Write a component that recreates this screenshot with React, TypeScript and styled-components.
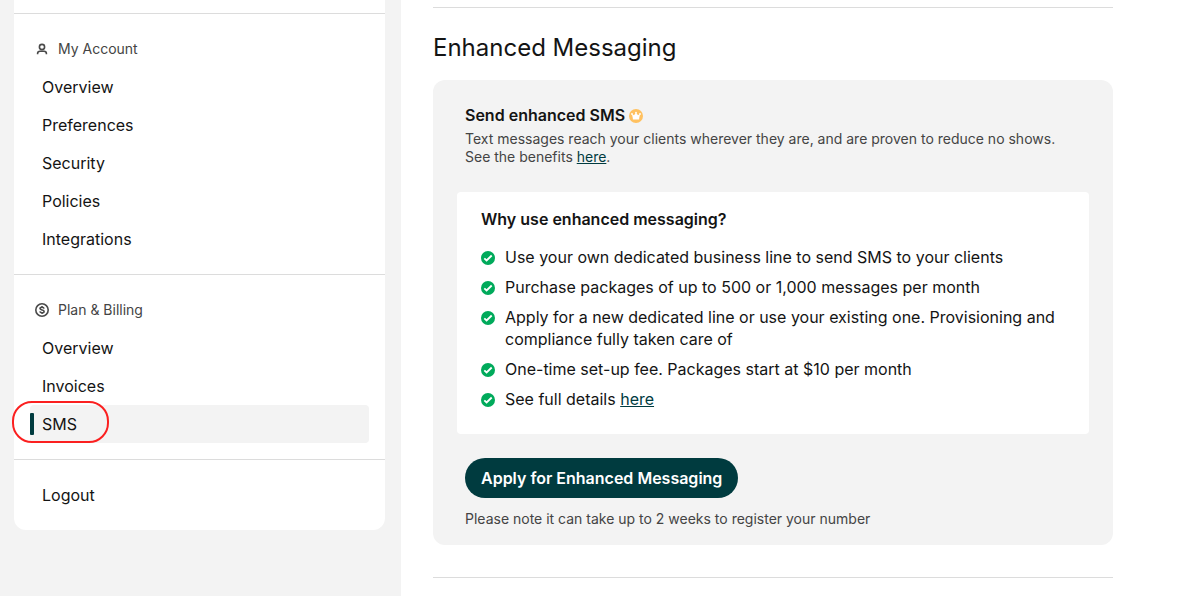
import React from "react";
import styled, { createGlobalStyle, css } from "styled-components";

const GlobalStyle = createGlobalStyle`
  *, *::before, *::after { box-sizing: border-box; }
  body {
    margin: 0;
    background: #ffffff;
    color: #141414;
    font-family: Inter, "Liberation Sans", sans-serif;
    font-size: 16px;
    line-height: 22px;
  }
`;

const Page = styled.div`
  display: flex;
  min-height: 100vh;
`;

const Sidebar = styled.aside`
  flex: 0 0 401px;
  padding: 0 16px 16px 14px;
  background: #f3f3f3;
`;

const Menu = styled.nav`
  padding-top: 13px;
  background: #ffffff;
  border-radius: 0 0 12px 12px;
`;

const MenuSection = styled.section`
  padding: 16px;
  border-top: 1px solid #dcdcdc;
`;

const MenuHeading = styled.h2`
  display: flex;
  align-items: center;
  gap: 8px;
  height: 38px;
  margin: 0;
  padding-left: 4px;
  color: #444444;
  font-size: 14px;
  font-weight: 400;
  line-height: 18px;
`;

const MenuList = styled.ul`
  margin: 0;
  padding: 0;
  list-style: none;
`;

const MenuItem = styled.li`
  position: relative;
`;

const MenuLink = styled.a<{ $active?: boolean }>`
  display: flex;
  align-items: center;
  height: 38px;
  padding: 0 12px;
  border-radius: 4px;
  color: #141414;
  text-decoration: none;

  ${({ $active }) =>
    $active &&
    css`
      padding-left: 0;
      background: #f3f3f3;

      &::before {
        content: "";
        width: 4px;
        height: 22px;
        margin-right: 8px;
        border-radius: 1px;
        background: #003b3f;
      }
    `}
`;

const Highlight = styled.span`
  position: absolute;
  top: -4px;
  left: -18px;
  width: 97px;
  height: 42px;
  border: 2px solid #fb2020;
  border-radius: 20px;
  pointer-events: none;
`;

const Main = styled.main`
  flex: 1;
  min-width: 0;
  padding: 7px 72px 0 32px;
`;

const Feature = styled.section`
  padding: 24px 0 32px;
  border: solid #dcdcdc;
  border-width: 1px 0;
`;

const Title = styled.h1`
  margin: 0 0 16px;
  font-size: 24px;
  font-weight: 400;
  line-height: 32px;
`;

const Card = styled.div`
  padding: 24px 24px 17px;
  border-radius: 12px;
  background: #f3f3f3;
`;

const Intro = styled.div`
  padding: 0 8px;
`;

const Badge = styled.svg`
  flex: none;
  width: 14px;
  height: 14px;
  margin-top: 5px;
`;

const Subtitle = styled.h3`
  display: flex;
  gap: 4px;
  margin: 0;
  font-size: 16px;
  font-weight: 600;
  line-height: 22px;
`;

const SmallText = styled.p`
  margin: 4px 0 0;
  color: #444444;
  font-size: 14px;
  line-height: 18px;
`;

const TextLink = styled.a`
  color: #003b3f;
  text-decoration: underline;
`;

const Panel = styled.div`
  margin: 26px 0 24px;
  padding: 16px 24px 24px;
  border-radius: 4px;
  background: #ffffff;
`;

const Benefits = styled.ul`
  display: flex;
  flex-direction: column;
  gap: 8px;
  margin: 16px 0 0;
  padding: 0;
  list-style: none;
`;

const Benefit = styled.li`
  display: flex;
  gap: 10px;
`;

const Actions = styled.div`
  display: flex;
  flex-direction: column;
  align-items: flex-start;
  gap: 8px;
  padding: 0 8px;
`;

const Button = styled.button`
  height: 40px;
  padding: 0 16px;
  border: 0;
  border-radius: 20px;
  background: #003b3f;
  color: #ffffff;
  font: inherit;
  font-weight: 600;
  cursor: pointer;
`;

const UserIcon = () => (
  <svg width="16" height="16" viewBox="0 0 16 16" fill="none" stroke="#4a4a4a" strokeWidth="1.6" aria-hidden="true">
    <circle cx="8" cy="6" r="2.6" />
    <path d="M3.6 13.2v-.6c0-1.400 1-2.300 2.300-2.300h4.200c1.300 0 2.300.9 2.300 2.300v.6" />
  </svg>
);

const DollarIcon = () => (
  <svg width="16" height="16" viewBox="0 0 16 16" fill="none" stroke="#4a4a4a" strokeWidth="1.6" aria-hidden="true">
    <circle cx="8" cy="8" r="6.2" />
    <path d="M10 6.600C9.900 5.700 9.100 5.300 8 5.300s-2 .4-2 1.300C6 8.500 10.100 7.500 10.100 9.400c0 .9-1 1.300-2.100 1.300s-2-.4-2.100-1.300M8 4v1.300M8 10.700V12" />
  </svg>
);

const CrownIcon = () => (
  <Badge viewBox="0 0 14 14" aria-hidden="true">
    <circle cx="7" cy="7" r="7" fill="#ffc160" />
    <g fill="#ffffff">
      <path d="M2.900 5 5 6.300 7 3.600 9 6.300 11.100 5 10.200 8.900H3.800Z" />
      <rect x="3.800" y="8.800" width="6.400" height="1.700" rx=".5" />
      <circle cx="7" cy="3.600" r=".9" />
      <circle cx="3" cy="5" r=".9" />
      <circle cx="11" cy="5" r=".9" />
    </g>
  </Badge>
);

const CheckIcon = () => (
  <Badge viewBox="0 0 14 14" aria-hidden="true">
    <circle cx="7" cy="7" r="7" fill="#00aa5b" />
    <path d="m3.300 7.300 2.300 2.200L10.700 4.500" fill="none" stroke="#ffffff" strokeWidth="1.800" />
  </Badge>
);

type Section = {
  id: string;
  label: string;
  icon: React.ReactNode;
  items: string[];
};

const sections: Section[] = [
  {
    id: "account",
    label: "My Account",
    icon: <UserIcon />,
    items: ["Overview", "Preferences", "Security", "Policies", "Integrations"],
  },
  {
    id: "billing",
    label: "Plan & Billing",
    icon: <DollarIcon />,
    items: ["Overview", "Invoices", "SMS"],
  },
];

const benefits: React.ReactNode[] = [
  "Use your own dedicated business line to send SMS to your clients",
  "Purchase packages of up to 500 or 1,000 messages per month",
  "Apply for a new dedicated line or use your existing one. Provisioning and compliance fully taken care of",
  "One-time set-up fee. Packages start at $10 per month",
  <>
    See full details <TextLink href="#details">here</TextLink>
  </>,
];

export default function App() {
  return (
    <>
      <GlobalStyle />
      <Page>
        <Sidebar>
          <Menu>
            {sections.map((section) => (
              <MenuSection key={section.id}>
                <MenuHeading>
                  {section.icon}
                  {section.label}
                </MenuHeading>
                <MenuList>
                  {section.items.map((item) => {
                    const active = item === "SMS";
                    return (
                      <MenuItem key={item}>
                        <MenuLink
                          href={`#${section.id}-${item.toLowerCase()}`}
                          $active={active}
                          aria-current={active ? "page" : undefined}
                        >
                          {item}
                        </MenuLink>
                        {active && <Highlight />}
                      </MenuItem>
                    );
                  })}
                </MenuList>
              </MenuSection>
            ))}
            <MenuSection>
              <MenuLink href="#logout">Logout</MenuLink>
            </MenuSection>
          </Menu>
        </Sidebar>
        <Main>
          <Feature>
            <Title>Enhanced Messaging</Title>
            <Card>
              <Intro>
                <Subtitle>
                  Send enhanced SMS <CrownIcon />
                </Subtitle>
                <SmallText>
                  Text messages reach your clients wherever they are, and are proven to reduce no shows. See the
                  benefits <TextLink href="#benefits">here</TextLink>.
                </SmallText>
              </Intro>
              <Panel>
                <Subtitle>Why use enhanced messaging?</Subtitle>
                <Benefits>
                  {benefits.map((text, index) => (
                    <Benefit key={index}>
                      <CheckIcon />
                      <span>{text}</span>
                    </Benefit>
                  ))}
                </Benefits>
              </Panel>
              <Actions>
                <Button type="button">Apply for Enhanced Messaging</Button>
                <SmallText>Please note it can take up to 2 weeks to register your number</SmallText>
              </Actions>
            </Card>
          </Feature>
        </Main>
      </Page>
    </>
  );
}
